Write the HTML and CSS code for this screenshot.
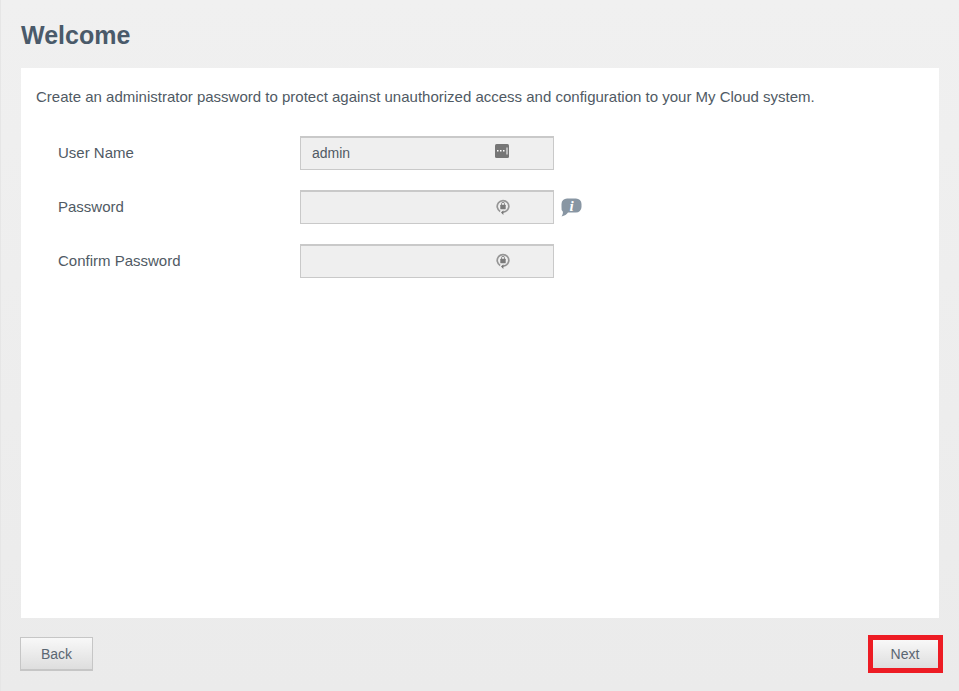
FILE: index.html
```html
<!DOCTYPE html>
<html lang="en">
<head>
    <meta charset="UTF-8">
    <title>Welcome</title>
    <link rel="stylesheet" href="styles.css">
</head>
<body>
    <div class="page">
        <h1 class="title">Welcome</h1>
        <div class="panel">
            <p class="intro">Create an administrator password to protect against unauthorized access and configuration to your My Cloud system.</p>
            <div class="form-row">
                <label class="form-label">User Name</label>
                <div class="field">
                    <span class="field-value">admin</span>
                    <svg class="field-icon icon-user" width="14" height="14" viewBox="0 0 14 14">
                        <rect width="14" height="14" rx="1.500" fill="#767676"/>
                        <path d="M2 6h1.500v1.500H2zM5 6h1.500v1.500H5zM8 6h1.500v1.500H8z" fill="#fff"/>
                        <path d="M11.500 3.500h1v7h-1z" fill="#fff"/>
                    </svg>
                </div>
            </div>
            <div class="form-row">
                <label class="form-label">Password</label>
                <div class="field">
                    <svg class="field-icon icon-lock" width="14" height="16" viewBox="0 0 14 16">
                        <path d="M4.200 12.400A5.800 5.800 0 1 1 10 12.300" fill="none" stroke="#969696" stroke-width="1.700"/>
                        <path d="M10 12.300 7 13.200" fill="none" stroke="#8c8c8c" stroke-width="1.700"/>
                        <path d="M7.400 11.200v4.800L5 13.600z" fill="#757575"/>
                        <rect x="4.300" y="5.800" width="5.400" height="4.400" rx="0.500" fill="#7a7a7a"/>
                        <path d="M5.500 6V4.800a1.500 1.500 0 0 1 3 0V6" fill="none" stroke="#8c8c8c"/>
                    </svg>
                </div>
                <svg class="info-icon" width="22" height="19" viewBox="0 0 22 19">
                    <path d="M7 0.500h9a5.500 5.500 0 0 1 5.500 5.500v3a5.500 5.500 0 0 1-5.500 5.500H8c-1.200 1.800-3.300 3.400-6.500 3.900 1-1.300 1.500-2.700 1.400-4.700A5.500 5.500 0 0 1 1.500 9V6A5.500 5.500 0 0 1 7 0.500z" fill="#8896a3"/>
                    <text x="11.500" y="13" class="info-glyph">i</text>
                </svg>
            </div>
            <div class="form-row">
                <label class="form-label">Confirm Password</label>
                <div class="field">
                    <svg class="field-icon icon-lock" width="14" height="16" viewBox="0 0 14 16">
                        <path d="M4.200 12.400A5.800 5.800 0 1 1 10 12.300" fill="none" stroke="#969696" stroke-width="1.700"/>
                        <path d="M10 12.300 7 13.200" fill="none" stroke="#8c8c8c" stroke-width="1.700"/>
                        <path d="M7.400 11.200v4.800L5 13.600z" fill="#757575"/>
                        <rect x="4.300" y="5.800" width="5.400" height="4.400" rx="0.500" fill="#7a7a7a"/>
                        <path d="M5.500 6V4.800a1.500 1.500 0 0 1 3 0V6" fill="none" stroke="#8c8c8c"/>
                    </svg>
                </div>
            </div>
        </div>
        <div class="actions">
            <button class="btn">Back</button>
            <button class="btn btn-next">Next</button>
        </div>
    </div>
</body>
</html>
```

FILE: styles.css
```css
* {
    margin: 0;
    padding: 0;
    box-sizing: border-box;
}

body {
    font-family: "Liberation Sans", Arial, sans-serif;
    color: #505a64;
    background: #ececec;
    height: 691px;
    overflow: hidden;
}

.page {
    height: 691px;
    padding: 0 20px;
    background: linear-gradient(#f0f0f0, #ebebeb);
    border-left: 1px solid #e6e6e6;
    display: flex;
    flex-direction: column;
}

.title {
    font-size: 25px;
    font-weight: 700;
    line-height: 29px;
    color: #4a5a6a;
    padding-top: 21px;
    height: 68px;
}

.panel {
    background: #ffffff;
    height: 550px;
    padding: 20px 15px;
}

.intro {
    font-size: 15px;
    line-height: 18px;
    margin-bottom: 30px;
}

.form-row {
    display: flex;
    align-items: center;
    height: 34px;
    margin-bottom: 20px;
    padding-left: 22px;
}

.form-label {
    width: 242px;
    font-size: 15px;
    padding-bottom: 2px;
}

.field {
    width: 254px;
    height: 34px;
    background: #efefef;
    border: 1px solid #c9c9c9;
    border-top-width: 2px;
    position: relative;
    display: flex;
    align-items: center;
    padding: 0 0 1px 11px;
    font-size: 14px;
}

.field-icon {
    position: absolute;
    left: 194px;
}

.icon-user {
    top: 6px;
}

.icon-lock {
    left: 195px;
    top: 7px;
}

.info-icon {
    margin-left: 6px;
}

.info-glyph {
    font-family: "Liberation Serif", serif;
    font-size: 15px;
    font-weight: 700;
    font-style: italic;
    fill: #ffffff;
    text-anchor: middle;
}

.actions {
    display: flex;
    justify-content: space-between;
    align-items: flex-start;
    padding-top: 19px;
    margin-left: -1px;
}

.btn {
    width: 73px;
    height: 34px;
    font-family: inherit;
    font-size: 14px;
    color: #5a6672;
    background: linear-gradient(#f8f8f8, #dedede);
    border: 1px solid #c6c6c6;
    border-bottom-width: 2px;
}

.btn-next {
    width: 65px;
    height: 28px;
    margin: 3px 1px 0 0;
    padding-right: 1px;
    border: none;
    outline: 5px solid #ed1c24;
}
```
